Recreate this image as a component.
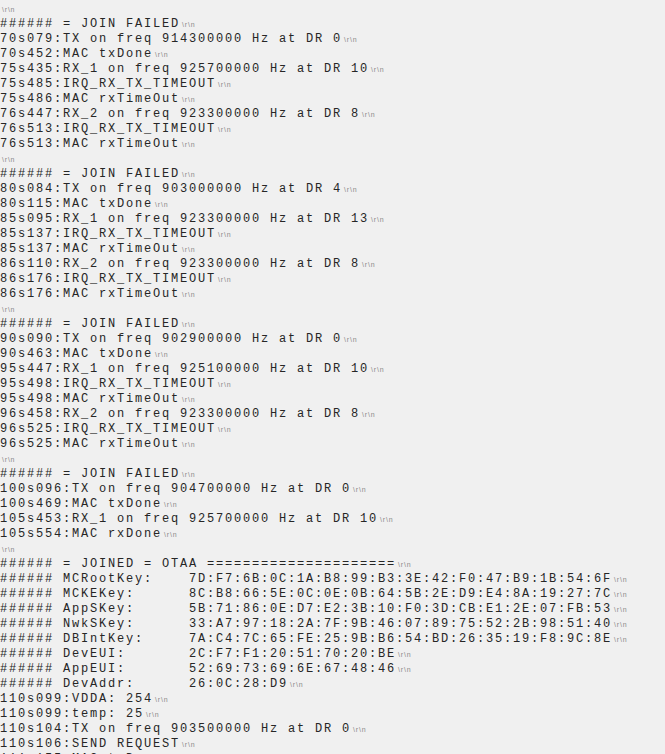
const KEYS = [
  ["MCRootKey:", "7D:F7:6B:0C:1A:B8:99:B3:3E:42:F0:47:B9:1B:54:6F"],
  ["MCKEKey:", "8C:B8:66:5E:0C:0E:0B:64:5B:2E:D9:E4:8A:19:27:7C"],
  ["AppSKey:", "5B:71:86:0E:D7:E2:3B:10:F0:3D:CB:E1:2E:07:FB:53"],
  ["NwkSKey:", "33:A7:97:18:2A:7F:9B:46:07:89:75:52:2B:98:51:40"],
  ["DBIntKey:", "7A:C4:7C:65:FE:25:9B:B6:54:BD:26:35:19:F8:9C:8E"],
  ["DevEUI:", "2C:F7:F1:20:51:70:20:BE"],
  ["AppEUI:", "52:69:73:69:6E:67:48:46"],
  ["DevAddr:", "26:0C:28:D9"],
];

const LINES = [
  "",
  "###### = JOIN FAILED",
  "70s079:TX on freq 914300000 Hz at DR 0",
  "70s452:MAC txDone",
  "75s435:RX_1 on freq 925700000 Hz at DR 10",
  "75s485:IRQ_RX_TX_TIMEOUT",
  "75s486:MAC rxTimeOut",
  "76s447:RX_2 on freq 923300000 Hz at DR 8",
  "76s513:IRQ_RX_TX_TIMEOUT",
  "76s513:MAC rxTimeOut",
  "",
  "###### = JOIN FAILED",
  "80s084:TX on freq 903000000 Hz at DR 4",
  "80s115:MAC txDone",
  "85s095:RX_1 on freq 923300000 Hz at DR 13",
  "85s137:IRQ_RX_TX_TIMEOUT",
  "85s137:MAC rxTimeOut",
  "86s110:RX_2 on freq 923300000 Hz at DR 8",
  "86s176:IRQ_RX_TX_TIMEOUT",
  "86s176:MAC rxTimeOut",
  "",
  "###### = JOIN FAILED",
  "90s090:TX on freq 902900000 Hz at DR 0",
  "90s463:MAC txDone",
  "95s447:RX_1 on freq 925100000 Hz at DR 10",
  "95s498:IRQ_RX_TX_TIMEOUT",
  "95s498:MAC rxTimeOut",
  "96s458:RX_2 on freq 923300000 Hz at DR 8",
  "96s525:IRQ_RX_TX_TIMEOUT",
  "96s525:MAC rxTimeOut",
  "",
  "###### = JOIN FAILED",
  "100s096:TX on freq 904700000 Hz at DR 0",
  "100s469:MAC txDone",
  "105s453:RX_1 on freq 925700000 Hz at DR 10",
  "105s554:MAC rxDone",
  "",
  "###### = JOINED = OTAA =====================",
  ...KEYS.map(([k, v]) => "###### " + k.padEnd(14, " ") + v),
  "110s099:VDDA: 254",
  "110s099:temp: 25",
  "110s104:TX on freq 903500000 Hz at DR 0",
  "110s106:SEND REQUEST",
  "111s155:MAC txDone",
];

function CrLf() {
  return (
    <span className="ml-[2px] text-[7px] tracking-[0.8px] text-[#8a8a8a] align-baseline font-['Liberation_Sans',Arial,sans-serif]">
      {"\\r\\n"}
    </span>
  );
}

export default function App() {
  return (
    <div className="h-[754px] overflow-hidden bg-[#f0f0f0] pt-[2px]">
      <div className="text-[12px] tracking-[1.8px] text-[#262626] font-['Liberation_Mono','Courier_New',monospace]">
        {LINES.map((line, i) => (
          <div key={i} className="h-[15px] leading-[15px] whitespace-pre">
            {line}
            <CrLf />
          </div>
        ))}
      </div>
    </div>
  );
}
